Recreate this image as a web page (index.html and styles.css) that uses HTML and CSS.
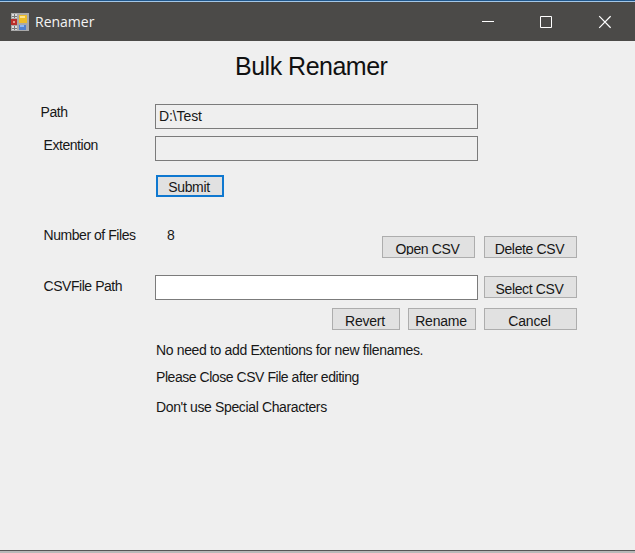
FILE: index.html
```html
<!DOCTYPE html>
<html lang="en">
<head>
<meta charset="utf-8">
<title>Renamer</title>
<link rel="stylesheet" href="styles.css">
</head>
<body>
<div class="window">
  <header class="titlebar">
    <svg class="app-icon" width="18" height="18" viewBox="0 0 18 18">
      <path fill="#a9a9a9" d="M0 0h18v18H0z"/>
      <path fill="#dcdcdc" d="M1 1h5v4H1zM1 13h5v4H1z"/>
      <path fill="#777" d="M3 1h1v4H3zM1 3h5v1H1zM3 13h1v4H3zM1 15h5v1H1z"/>
      <path fill="#b92f2c" d="M0 6h6v6H0z"/><path fill="#e89a8c" d="M2 8h2v2H2z"/>
      <path fill="#edbd28" d="M8 2h8v8H8z"/><path fill="#ffe58a" d="M9 3h5v2H9z"/>
      <path fill="#4f80d0" d="M8 12h7v5H8z"/><path fill="#8fb8f2" d="M9 12h4v2H9z"/>
    </svg>
    <span class="caption">Renamer</span>
    <svg class="controls" width="130" height="14" viewBox="0 0 130 14" fill="none" stroke="#fff">
      <path d="M1 6.5h12"/>
      <path d="M59.5 1.5h11v11h-11z"/>
      <path d="M118.2 1.2l11.4 11.6M129.6 1.2l-11.4 11.6" stroke-width="1.2"/>
    </svg>
  </header>
  <main class="form">
    <h1>Bulk Renamer</h1>
    <div class="row path"><label>Path</label><div class="field">D:\Test</div></div>
    <div class="row extension"><label>Extention</label><div class="field"></div></div>
    <div class="row submit"><button class="small focused">Submit</button></div>
    <div class="row count"><label>Number of Files</label><span class="number">8</span><div class="pair"><button><span class="clipped">Open CSV</span></button><button>Delete CSV</button></div></div>
    <div class="row csv"><label>CSVFile Path</label><div class="field editable"></div><button>Select CSV</button></div>
    <div class="row actions"><button class="small">Revert</button><button class="small">Rename</button><button>Cancel</button></div>
    <div class="notes">
      <p class="wide">No need to add Extentions for new filenames.</p>
      <p>Please Close CSV File after editing</p>
      <p class="last">Don't use Special Characters</p>
    </div>
  </main>
  <div class="edge"></div>
</div>
</body>
</html>
```
FILE: styles.css
```css
* { box-sizing: border-box; }
body {
  margin: 0;
  font: 14px/16px "Liberation Sans", Arial, sans-serif;
  letter-spacing: -0.45px;
  color: #171717;
}
.window { width: 635px; height: 553px; display: flex; flex-direction: column; background: #efefef; overflow: hidden; }
.titlebar {
  height: 41px;
  display: flex;
  align-items: center;
  padding: 1px 24px 0 11px;
  border-top: 1px solid #20578c;
  background: #4b4a48;
  box-shadow: inset 0 1px #a3c7e8;
  flex: none;
}
.caption { margin-left: 6px; font: 14px/18px "Open Sans", sans-serif; letter-spacing: 0; color: #f4f4f4; }
.controls { margin-left: auto; }
.form { flex: 1; }
h1 { margin: 10px 0 0 235px; height: 30px; font-size: 25px; line-height: 30px; font-weight: 400; letter-spacing: -0.5px; color: #111; }
.row { display: flex; height: 25px; }
label { width: 112px; margin-left: 43px; padding-left: 0.5px; flex: none; }
.field { width: 323px; height: 25px; padding: 3px; border: 1px solid #7b7b7b; background: #efefef; flex: none; letter-spacing: -0.1px; }
.editable { background: #fff; }
button {
  width: 93px;
  height: 22px;
  padding: 3px 2px 0 0;
  border: 1px solid #adadad;
  background: #e1e1e1;
  color: #171717;
  font: inherit;
  line-height: 16px;
  letter-spacing: -0.35px;
  overflow: hidden;
  flex: none;
}
.clipped { display: block; height: 14px; line-height: 16px; margin-bottom: 2px; overflow: hidden; }
.small { width: 68px; }
.focused { border: 2px solid #0f78d0; padding-top: 2px; }
.path { margin-top: 23px; }
.path label { margin-left: 40px; width: 115px; }
.extension { margin-top: 7px; }
.extension label { padding-top: 1px; }
.submit { height: 22px; margin: 14px 0 0 156px; }
.count { height: 22px; margin-top: 39px; }
.count label { margin-top: -9px; }
.number { margin: -9px 0 0 12px; width: 20px; }
.pair { display: flex; gap: 9px; margin-left: 195px; }
.csv { margin-top: 17px; }
.csv label { margin-top: 3px; }
.csv button { margin: 1px 0 0 6px; }
.actions { height: 22px; gap: 8px; margin: 8px 0 0 332px; }
.actions button { letter-spacing: -0.2px; }
.notes { margin: 12px 0 0 156px; }
p { margin: 0 0 11px; }
p:nth-child(2) { margin-bottom: 14px; }
.wide { letter-spacing: -0.35px; }
.last { letter-spacing: -0.36px; }
.edge { height: 3px; border-top: 1px solid #555; background: #b8b8b8; flex: none; }
```
